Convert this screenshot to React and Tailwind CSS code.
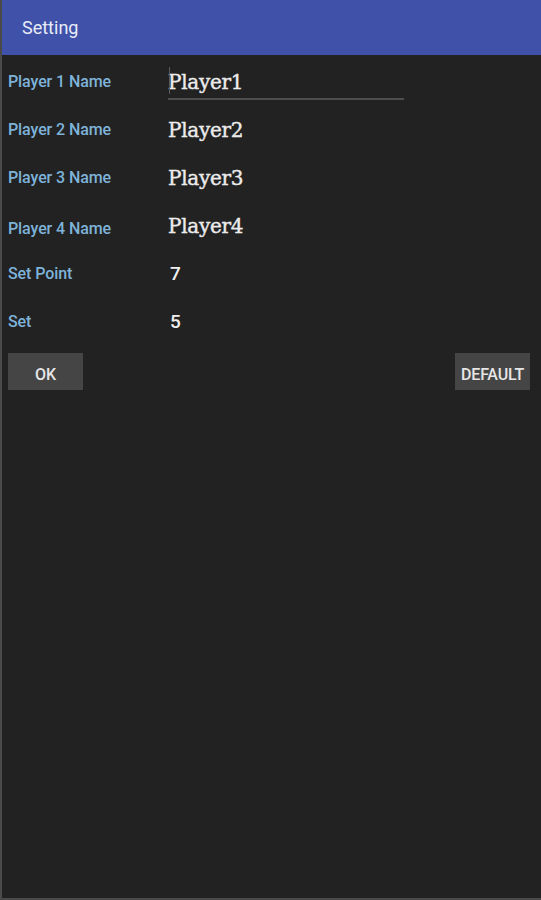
export default function App() {
  const rows = [
    { label: "Player 1 Name", value: "Player1", serif: true, focused: true },
    { label: "Player 2 Name", value: "Player2", serif: true },
    { label: "Player 3 Name", value: "Player3", serif: true },
    { label: "Player 4 Name", value: "Player4", serif: true, labelDrop: true },
    { label: "Set Point", value: "7" },
    { label: "Set", value: "5" },
  ];

  return (
    <div
      className="w-[541px] h-[900px] flex flex-col bg-[#222222] border-l-2 border-b-2 border-[#4a4a4a] overflow-hidden"
      style={{ fontFamily: "Roboto, 'Liberation Sans', sans-serif" }}
    >
      <header className="h-[55px] shrink-0 flex items-center pl-[20px] bg-[#3f51a8] text-[#e8ecf8] text-[18px]">
        Setting
      </header>

      <div className="flex flex-col pt-[3px]">
        {rows.map((row) => (
          <div key={row.label} className="h-12 flex items-center">
            <div
              className={
                row.labelDrop
                  ? "w-[166px] pl-[6px] pt-[6px] text-[16px] font-medium tracking-[-0.1px] text-[#7eb3d9]"
                  : "w-[166px] pl-[6px] text-[16px] font-medium tracking-[-0.1px] text-[#7eb3d9]"
              }
            >
              {row.label}
            </div>
            {row.serif ? (
              <div className="relative w-[236px] text-[20px] text-[#ececec] font-['DejaVu_Serif',serif] tracking-[-0.3px] [-webkit-text-stroke:0.4px_#ececec]">
                {row.focused && (
                  <span className="absolute left-[1px] top-0 h-[27px] w-px bg-[#5a5a5a]" />
                )}
                {row.value}
                {row.focused && (
                  <span className="absolute left-0 right-0 top-[31px] h-[2px] bg-[#4d4d4d]" />
                )}
              </div>
            ) : (
              <div className="pl-[2px] text-[19px] font-medium text-[#f0f0f0]">{row.value}</div>
            )}
          </div>
        ))}
      </div>

      <div className="flex justify-between items-center pl-[6px] pr-[11px] mt-[7px]">
        <button className="w-[75px] h-[37px] pt-[6px] bg-[#454545] text-[#e6e6e6] text-[16px] font-medium">
          OK
        </button>
        <button className="w-[75px] h-[37px] pt-[6px] bg-[#454545] text-[#e6e6e6] text-[16px] font-medium tracking-[-0.2px] whitespace-nowrap">
          DEFAULT
        </button>
      </div>
    </div>
  );
}
